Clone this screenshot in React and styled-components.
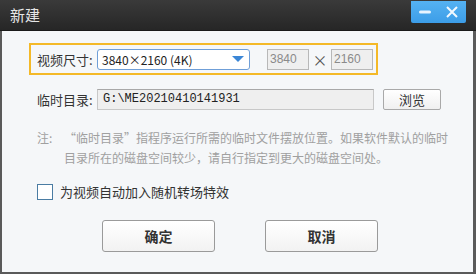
import React, { useState } from 'react';
import styled, { createGlobalStyle } from 'styled-components';

const GlobalStyle = createGlobalStyle`
  html, body {
    margin: 0;
    padding: 0;
    background: #ffffff;
  }
  body {
    font-family: "Noto Sans CJK SC", "Liberation Sans", sans-serif;
    font-size: 12px;
  }
`;

const Window = styled.div`
  width: 476px;
  height: 275px;
  display: flex;
  flex-direction: column;
  box-sizing: border-box;
`;

const TitleBar = styled.div`
  height: 30px;
  background: linear-gradient(#3a3a3a, #262626);
  display: flex;
  align-items: flex-start;
  justify-content: space-between;
  padding-left: 10px;
  padding-right: 10px;
  border-bottom: 1px solid #1a1a1a;
`;

const Title = styled.div`
  color: #e6e6e6;
  font-size: 15px;
  line-height: 30px;
`;

const TitleButtons = styled.div`
  margin-top: 1px;
  width: 55px;
  height: 22px;
  background: linear-gradient(#55b2f2, #3c9de8);
  border-radius: 0 0 2px 2px;
  display: flex;
  align-items: center;
  justify-content: space-around;
`;

const Body = styled.div`
  flex: 1;
  background: #f5f7f9;
  border: 2px solid #5a5a5a;
  border-top: none;
  border-right-width: 3px;
  padding: 12px 0 0 27px;
  display: flex;
  flex-direction: column;
  margin-bottom: 1px;
`;

const Highlight = styled.div`
  width: 339px;
  height: 28px;
  border: 2px solid #f4b928;
  display: flex;
  align-items: center;
  padding-left: 6px;
`;

const Label = styled.span`
  color: #333;
  font-size: 13px;
  width: 60px;
  flex: none;
  white-space: nowrap;
`;

const Select = styled.div`
  width: 142px;
  height: 19px;
  border: 1px solid #6f9fd8;
  border-radius: 3px;
  background: #fff;
  display: flex;
  align-items: center;
  justify-content: space-between;
  padding: 0 5px 0 4px;
  box-sizing: content-box;
  margin-right: 17px;
  color: #222;
  font-size: 12px;
`;

const Arrow = styled.span`
  width: 0;
  height: 0;
  border-left: 6px solid transparent;
  border-right: 6px solid transparent;
  border-top: 6px solid #3b86d6;
`;

const SizeBox = styled.div`
  width: 38px;
  height: 19px;
  border: 1px solid #b8b8b8;
  background: #efefef;
  color: #8a8a8a;
  font-family: "Liberation Sans", sans-serif;
  font-size: 12px;
  line-height: 19px;
  padding-left: 2px;
  box-sizing: content-box;
`;

const Times = styled.span`
  color: #555;
  font-size: 15px;
  width: 22px;
  text-align: center;
`;

const Row = styled.div`
  display: flex;
  align-items: center;
  padding-left: 8px;
  margin-top: 14px;
`;

const PathBox = styled.div`
  width: 270px;
  height: 19px;
  border: 1px solid #c8c8c8;
  border-top-color: #a8a8a8;
  background: #efefef;
  color: #222;
  font-family: "Liberation Mono", monospace;
  font-size: 12px;
  line-height: 19px;
  padding-left: 5px;
  box-sizing: content-box;
  margin-right: 9px;
`;

const SmallButton = styled.button`
  width: 58px;
  height: 21px;
  border: 1px solid #a9a9a9;
  border-radius: 2px;
  background: linear-gradient(#ffffff, #f0f0f0);
  font-family: inherit;
  font-size: 13px;
  color: #333;
  padding: 0;
  line-height: 19px;
`;

const Note = styled.div`
  color: #a0a0a0;
  font-size: 12px;
  line-height: 20px;
  margin-top: 18px;
  padding-left: 8px;
  display: flex;
`;

const NoteTag = styled.span`
  flex: none;
  width: 27px;
`;

const NoteText = styled.span`
  width: 390px;
`;

const CheckRow = styled.label`
  display: flex;
  align-items: center;
  gap: 7px;
  padding-left: 8px;
  margin-top: 14px;
  color: #333;
  font-size: 13px;
`;

const Check = styled.span`
  width: 14px;
  height: 14px;
  border: 1px solid #4a7ca3;
  background: ${(p) => (p.checked ? '#3c9de8' : '#fff')};
`;

const Footer = styled.div`
  display: flex;
  gap: 50px;
  padding-left: 73px;
  margin-top: 19px;
`;

const BigButton = styled.button`
  width: 113px;
  height: 32px;
  border: 1px solid #9a9a9a;
  border-radius: 3px;
  background: linear-gradient(#ffffff, #f2f2f2);
  font-family: inherit;
  font-size: 14px;
  font-weight: bold;
  color: #333;
  padding: 0;
`;

const App = () => {
  const [checked, setChecked] = useState(false);

  return (
    <>
      <GlobalStyle />
      <Window>
        <TitleBar>
          <Title>新建</Title>
          <TitleButtons>
            <svg width="14" height="14" viewBox="0 0 14 14">
              <rect x="1" y="5.5" width="12" height="3" rx="1.5" fill="#e8f4ff" />
            </svg>
            <svg width="14" height="14" viewBox="0 0 14 14">
              <path d="M2 2 L12 12 M12 2 L2 12" stroke="#f2f9ff" strokeWidth="2" />
            </svg>
          </TitleButtons>
        </TitleBar>
        <Body>
          <Highlight>
            <Label>视频尺寸:</Label>
            <Select>
              <span>3840×2160 (4K)</span>
              <Arrow />
            </Select>
            <SizeBox>3840</SizeBox>
            <Times>×</Times>
            <SizeBox>2160</SizeBox>
          </Highlight>
          <Row>
            <Label>临时目录:</Label>
            <PathBox>G:\ME20210410141931</PathBox>
            <SmallButton>浏览</SmallButton>
          </Row>
          <Note>
            <NoteTag>注:</NoteTag>
            <NoteText>
              “临时目录”指程序运行所需的临时文件摆放位置。如果软件默认的临时目录所在的磁盘空间较少，请自行指定到更大的磁盘空间处。
            </NoteText>
          </Note>
          <CheckRow onClick={() => setChecked(!checked)}>
            <Check checked={checked} />
            为视频自动加入随机转场特效
          </CheckRow>
          <Footer>
            <BigButton>确定</BigButton>
            <BigButton>取消</BigButton>
          </Footer>
        </Body>
      </Window>
    </>
  );
};

export default App;
